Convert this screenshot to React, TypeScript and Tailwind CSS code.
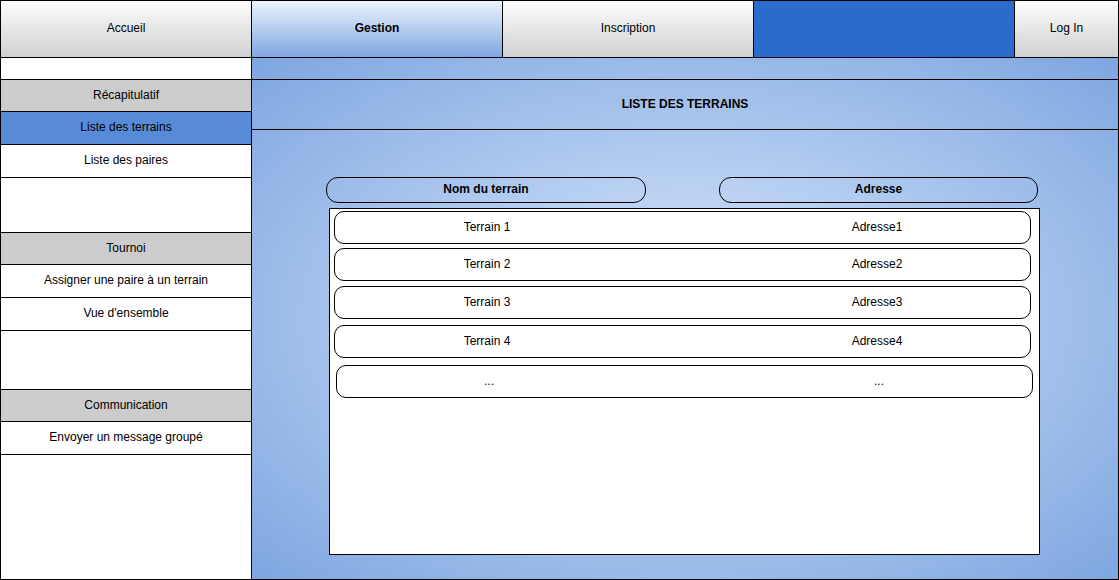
const font = { fontFamily: '"Liberation Sans", Arial, sans-serif' };

const rows = [
  { name: "Terrain 1", addr: "Adresse1", cls: "mt-0" },
  { name: "Terrain 2", addr: "Adresse2", cls: "mt-[4px]" },
  { name: "Terrain 3", addr: "Adresse3", cls: "mt-[5px]" },
  { name: "Terrain 4", addr: "Adresse4", cls: "mt-[6px]" },
  { name: "...", addr: "...", cls: "mt-[7px] ml-[2px]" },
];

function NavCell({ label, active, bold, className }: { label?: string; active?: boolean; bold?: boolean; className: string }) {
  return (
    <div
      className={`flex items-center justify-center pb-[2px] border-r border-black text-[12px] text-black ${
        bold ? "font-bold" : ""
      } ${active ? "bg-linear-to-b from-[#eef4fc] to-[#7ea6e0]" : "bg-linear-to-b from-[#fdfdfd] to-[#d0d0d0]"} ${className}`}
    >
      {label}
    </div>
  );
}

function SideRow({ label, kind, h }: { label?: string; kind: "head" | "item" | "active" | "blank"; h: string }) {
  const bg = kind === "head" ? "bg-[#cccccc]" : kind === "active" ? "bg-[#578bd8]" : "bg-white";
  return (
    <div className={`flex items-center justify-center pb-[2px] border-b border-black text-[12px] text-black ${bg} ${h}`}>
      {label}
    </div>
  );
}

export default function App() {
  return (
    <div style={font} className="w-[1119px] h-[580px] border border-black flex flex-col bg-white overflow-hidden">
      <nav className="h-[57px] flex border-b border-black shrink-0">
        <NavCell label="Accueil" className="w-[251px]" />
        <NavCell label="Gestion" active bold className="w-[251px]" />
        <NavCell label="Inscription" className="w-[251px]" />
        <div className="w-[261px] border-r border-black bg-[#2a6bcc]" />
        <div className="flex-1 flex items-center justify-center pb-[2px] text-[12px] text-black bg-linear-to-b from-[#fdfdfd] to-[#d0d0d0]">
          Log In
        </div>
      </nav>

      <div className="flex flex-1 min-h-0">
        <aside className="w-[251px] border-r border-black flex flex-col shrink-0">
          <SideRow kind="blank" h="h-[22px]" />
          <SideRow kind="head" label="Récapitulatif" h="h-[32px]" />
          <SideRow kind="active" label="Liste des terrains" h="h-[33px]" />
          <SideRow kind="item" label="Liste des paires" h="h-[33px]" />
          <SideRow kind="blank" h="h-[55px]" />
          <SideRow kind="head" label="Tournoi" h="h-[32px]" />
          <SideRow kind="item" label="Assigner une paire à un terrain" h="h-[33px]" />
          <SideRow kind="item" label="Vue d'ensemble" h="h-[33px]" />
          <SideRow kind="blank" h="h-[59px]" />
          <SideRow kind="head" label="Communication" h="h-[32px]" />
          <SideRow kind="item" label="Envoyer un message groupé" h="h-[33px]" />
          <div className="flex-1 bg-white" />
        </aside>

        <main className="flex-1 flex flex-col bg-[radial-gradient(ellipse_at_center,#dae8fc_0%,#7ea6e0_100%)]">
          <div className="h-[22px] border-b border-black" />
          <div className="h-[50px] border-b border-black flex items-center justify-center pb-[2px] text-[12px] font-bold text-black">
            LISTE DES TERRAINS
          </div>
          <div className="pl-[74px] pt-[47px]">
            <div className="flex gap-[73px]">
              <div className="w-[320px] h-[26px] rounded-[12px] border border-black flex items-center justify-center pb-[2px] text-[12px] font-bold text-black">
                Nom du terrain
              </div>
              <div className="w-[319px] h-[26px] rounded-[12px] border border-black flex items-center justify-center pb-[2px] text-[12px] font-bold text-black">
                Adresse
              </div>
            </div>
            <div className="ml-[3px] mt-[5px] w-[711px] h-[347px] border border-black bg-white pl-[4px] pt-[2px]">
              {rows.map((r) => (
                <div
                  key={r.name}
                  className={`w-[697px] h-[33px] border border-black rounded-[10px] flex items-center justify-between pb-[2px] text-[12px] text-black ${r.cls}`}
                >
                  <span className="w-[304px] text-center">{r.name}</span>
                  <span className="w-[306px] text-center">{r.addr}</span>
                </div>
              ))}
            </div>
          </div>
        </main>
      </div>
    </div>
  );
}
